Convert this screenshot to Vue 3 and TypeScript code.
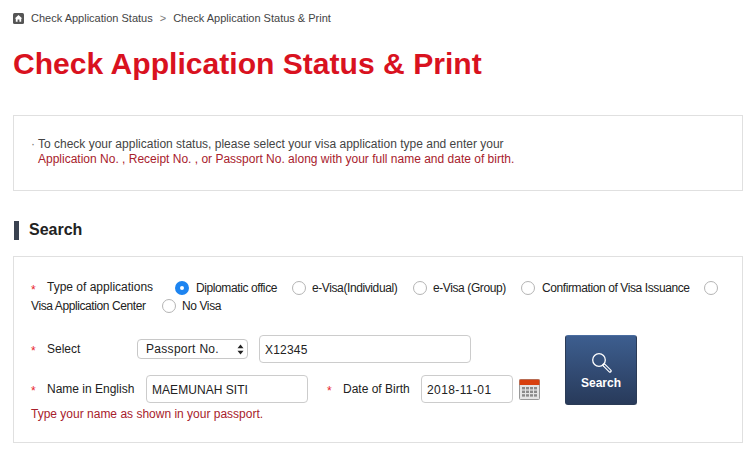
<script setup lang="ts">
const types: { label: string; checked?: boolean; cls: string }[] = [
  { label: 'Diplomatic office', checked: true, cls: 't1' },
  { label: 'e-Visa(Individual)', cls: 't2' },
  { label: 'e-Visa (Group)', cls: 't3' },
  { label: 'Confirmation of Visa Issuance', cls: 't4' },
]
</script>

<template>
  <div class="page">
    <nav class="crumbs">
      <svg class="home" width="11" height="11" viewBox="0 0 11 11">
        <rect width="11" height="11" rx="1.5" fill="#555" />
        <path d="M5.5 2 L9.3 5.6 H8.2 V8.8 H6.4 V6.6 H4.6 V8.8 H2.8 V5.6 H1.7 Z" fill="#fff" />
      </svg>
      <span>Check Application Status</span>
      <span class="sep">&gt;</span>
      <span>Check Application Status &amp; Print</span>
    </nav>

    <h1 class="title">Check Application Status &amp; Print</h1>

    <section class="notice">
      <p><span class="dot">·</span>To check your application status, please select your visa application type and enter your</p>
      <p class="red">Application No. , Receipt No. , or Passport No. along with your full name and date of birth.</p>
    </section>

    <h2 class="heading">Search</h2>

    <section class="form">
      <div class="types">
        <div class="type-line">
          <span class="star">*</span>
          <span class="type-label">Type of applications</span>
          <label v-for="t in types" :key="t.label" class="opt" :class="t.cls">
            <span class="radio" :class="{ on: t.checked }"></span>
            <span>{{ t.label }}</span>
          </label>
          <span class="radio"></span>
        </div>
        <div class="type-line second">
          <span>Visa Application Center</span>
          <label class="opt">
            <span class="radio"></span>
            <span>No Visa</span>
          </label>
        </div>
      </div>

      <div class="body">
        <div class="fields">
          <div class="row r-select">
            <span class="star">*</span>
            <span class="lab lab-select">Select</span>
            <div class="select">
              <span>Passport No.</span>
              <svg width="7" height="11" viewBox="0 0 7 11">
                <path d="M3.5 0.5 L6.5 4.2 H0.5 Z M3.5 10.5 L0.5 6.8 H6.5 Z" fill="#222" />
              </svg>
            </div>
            <input class="input passport" value="X12345" />
          </div>
          <div class="row r-name">
            <span class="star">*</span>
            <span class="lab lab-name">Name in English</span>
            <input class="input name" value="MAEMUNAH SITI" />
            <span class="star star-dob">*</span>
            <span class="lab lab-dob">Date of Birth</span>
            <input class="input dob" value="2018-11-01" />
            <svg class="cal" width="21" height="21" viewBox="0 0 21 21">
              <rect x="0.5" y="0.5" width="20" height="20" rx="1" fill="#e4e4e4" stroke="#999" />
              <rect x="0.5" y="0.5" width="20" height="5.5" fill="#d8400f" />
              <g fill="#8a8a8a">
                <rect x="3" y="8" width="3" height="2.4" /><rect x="7" y="8" width="3" height="2.4" /><rect x="11" y="8" width="3" height="2.4" /><rect x="15" y="8" width="3" height="2.4" />
                <rect x="3" y="11.6" width="3" height="2.4" /><rect x="7" y="11.6" width="3" height="2.4" /><rect x="11" y="11.6" width="3" height="2.4" /><rect x="15" y="11.6" width="3" height="2.4" />
                <rect x="3" y="15.2" width="3" height="2.4" /><rect x="7" y="15.2" width="3" height="2.4" /><rect x="11" y="15.2" width="3" height="2.4" /><rect x="15" y="15.2" width="3" height="2.4" />
              </g>
            </svg>
          </div>
          <p class="hint">Type your name as shown in your passport.</p>
        </div>
        <button class="search" type="button">
          <svg width="21" height="21" viewBox="0 0 21 21" fill="none">
            <circle cx="8" cy="8" r="6.3" stroke="#fff" stroke-width="1.3" />
            <path d="M13 13 L19 19" stroke="#fff" stroke-width="3.4" stroke-linecap="round" />
            <path d="M13.4 13.4 L18.8 18.8" stroke="#33507c" stroke-width="1.3" stroke-linecap="round" />
          </svg>
          <span>Search</span>
        </button>
      </div>
    </section>
  </div>
</template>

<style scoped>
.page {
  width: 754px;
  height: 469px;
  box-sizing: border-box;
  padding: 12px 11px 0 13px;
  overflow: hidden;
  background: #fff;
  font-family: "Liberation Sans", Arial, sans-serif;
  font-size: 12px;
  color: #222;
}
.crumbs {
  display: flex;
  align-items: center;
  height: 12px;
  font-size: 11px;
  color: #444;
}
.home { margin-right: 7px; }
.sep { margin: 0 7px; color: #777; }
.title {
  margin: 22px 0 0;
  font-size: 30.1px;
  line-height: 36px;
  font-weight: 700;
  color: #d9121f;
}
.notice {
  margin-top: 33px;
  height: 76px;
  box-sizing: border-box;
  padding: 21px 17px 0 24px;
  border: 1px solid #e0e0e0;
}
.notice p {
  margin: 0;
  line-height: 15px;
  color: #444;
  position: relative;
}
.dot {
  position: absolute;
  left: -7px;
  color: #777;
}
.notice .red { color: #a8212c; }
.heading {
  margin: 30px 0 0 1px;
  height: 19px;
  padding-left: 10px;
  border-left: 5px solid #3a4250;
  font-size: 16px;
  line-height: 18px;
  font-weight: 700;
  color: #222;
}
.form {
  margin-top: 16px;
  height: 187px;
  box-sizing: border-box;
  padding: 21px 0 0 17px;
  border: 1px solid #e0e0e0;
}
.types { height: 41px; }
.type-line {
  display: flex;
  align-items: center;
  height: 19px;
  letter-spacing: -0.4px;
}
.type-line.second { height: 18px; }
.star {
  width: 16px;
  flex: none;
  padding-top: 4px;
  color: #e8242c;
  font-size: 12px;
  letter-spacing: 0;
}
.type-label {
  width: 128px;
  flex: none;
  letter-spacing: 0;
  position: relative;
  top: -1px;
}
.opt {
  display: inline-flex;
  align-items: center;
  gap: 6px;
}
.t1 { width: 117px; gap: 7px; }
.t2 { width: 121px; }
.t3 { width: 108px; }
.t4 { width: 183px; gap: 7px; }
.second > span { width: 131px; flex: none; }
.radio {
  display: inline-block;
  flex: none;
  width: 14px;
  height: 14px;
  box-sizing: border-box;
  border: 1px solid #b4b4b4;
  border-radius: 50%;
  background: #fff;
}
.radio.on {
  border: 5px solid #1d84f0;
}
.body {
  display: flex;
  margin-top: 16px;
}
.fields { width: 534px; flex: none; }
.row {
  display: flex;
  align-items: center;
  height: 28px;
}
.r-name { margin-top: 12px; }
.lab { flex: none; }
.lab-select { width: 90px; }
.lab-name { width: 99px; }
.lab-dob { width: 78px; }
.star-dob { margin-left: 19px; }
.select {
  display: flex;
  align-items: center;
  justify-content: space-between;
  width: 111px;
  height: 20px;
  box-sizing: border-box;
  padding: 0 3px 0 8px;
  border: 1px solid #c8c8c8;
  border-radius: 4px;
  letter-spacing: 0.3px;
}
.input {
  height: 28px;
  box-sizing: border-box;
  padding: 1px 5px 0;
  border: 1px solid #ccc;
  border-radius: 4px;
  background: #fff;
  font: inherit;
  color: #222;
  outline: none;
  letter-spacing: 0.2px;
}
.passport { width: 212px; margin-left: 11px; }
.name { width: 162px; letter-spacing: 0.05px; }
.dob { width: 92px; letter-spacing: 0.4px; }
.cal { margin-left: 6px; flex: none; }
.hint {
  margin: 4px 0 0 0;
  line-height: 14px;
  color: #a8212c;
}
.search {
  width: 72px;
  height: 70px;
  flex: none;
  display: flex;
  flex-direction: column;
  align-items: center;
  justify-content: flex-start;
  gap: 3px;
  box-sizing: border-box;
  padding: 16px 0 0 0;
  border: 1px solid #2b3b56;
  border-top-color: #4a6da0;
  border-radius: 3px;
  background: linear-gradient(180deg, #3d5e8f 0%, #283a5a 100%);
  color: #fff;
  font: 700 12px "Liberation Sans", Arial, sans-serif;
}
</style>
